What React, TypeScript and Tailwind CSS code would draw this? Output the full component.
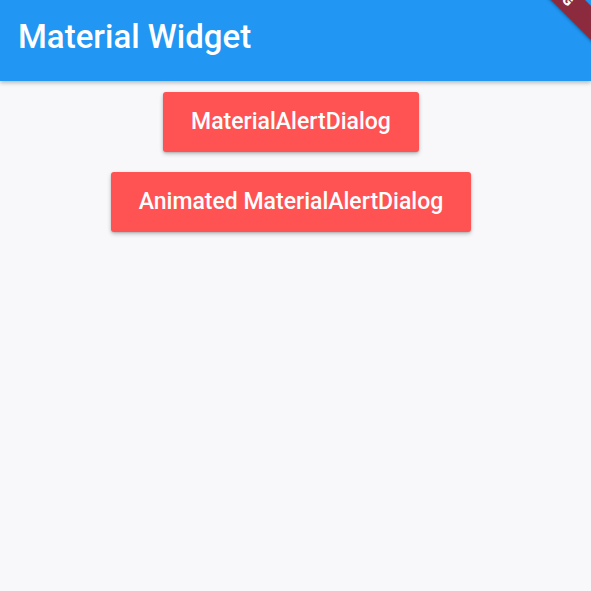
// Material Widget — app bar, two red dialog buttons and the Flutter debug banner in the corner.

const font = { fontFamily: 'Roboto, "Liberation Sans", sans-serif' }

function DebugBanner(): JSX.Element {
  return (
    <div className="pointer-events-none absolute inset-0 z-20 overflow-hidden">
      <div
        className="absolute left-[455px] top-[-25px] flex h-[24px] w-[200px] rotate-45 items-center justify-center bg-[#8c2b3e] shadow-[0_1px_3px_rgba(0,0,0,0.35)]"
      >
        <span className="text-[14px] font-black leading-none tracking-[0.5px] text-white">DEBUG</span>
      </div>
    </div>
  )
}

function RedButton(props: { label: string }): JSX.Element {
  return (
    <button className="h-[60px] rounded-[3px] bg-[#ff5252] px-[28px] text-[23px] font-medium text-white shadow-[0_2px_4px_rgba(0,0,0,0.22),0_1px_2px_rgba(0,0,0,0.12)]">
      {props.label}
    </button>
  )
}

export default function App(): JSX.Element {
  return (
    <div className="relative flex h-screen w-full flex-col overflow-hidden bg-[#f8f7fa]" style={font}>
      <header className="z-10 flex h-[81px] flex-shrink-0 items-center bg-[#2196f3] px-[18px] pb-[8px] shadow-[0_2px_4px_rgba(0,0,0,0.25)]">
        <h1 className="text-[33px] font-medium leading-none text-white">Material Widget</h1>
      </header>
      <main className="flex flex-col items-center gap-[20px] pr-[9px] pt-[11px]">
        <RedButton label="MaterialAlertDialog" />
        <RedButton label="Animated MaterialAlertDialog" />
      </main>
      <DebugBanner />
    </div>
  )
}
